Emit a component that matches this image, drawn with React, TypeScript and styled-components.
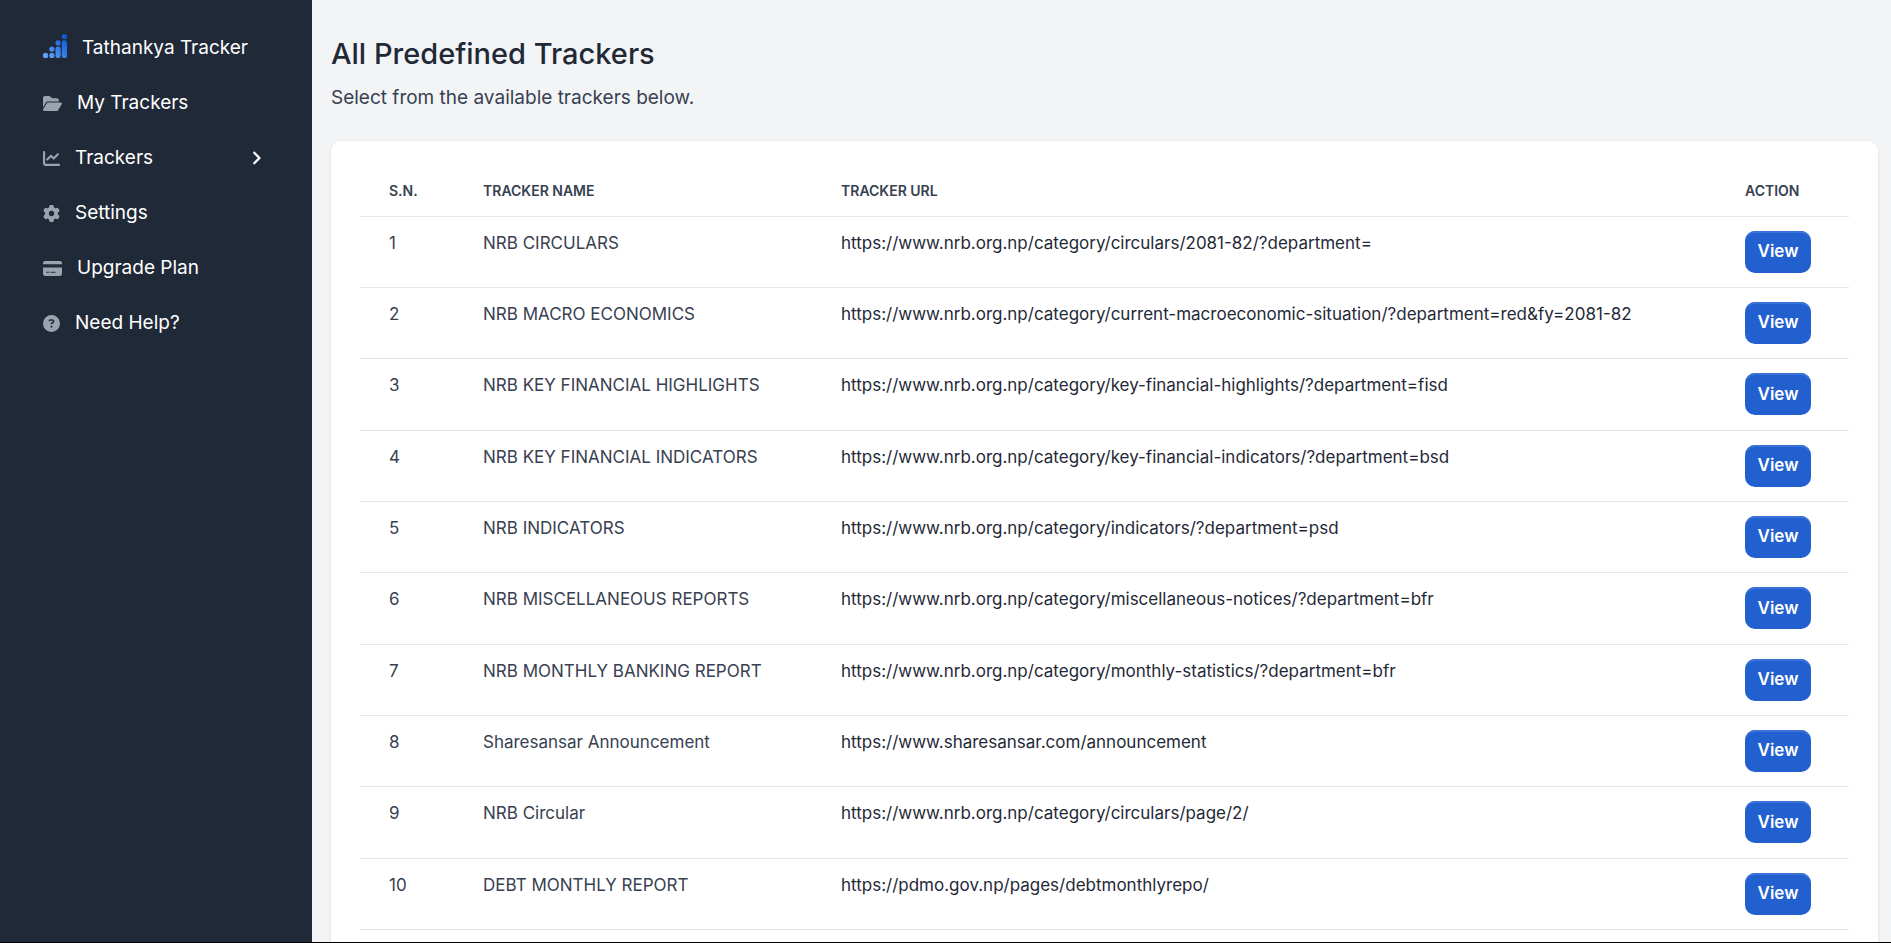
import React from "react";
import styled, { createGlobalStyle } from "styled-components";
import {
  FaFolderOpen,
  FaChartLine,
  FaGear,
  FaCreditCard,
  FaCircleQuestion,
  FaChevronRight,
} from "react-icons/fa6";

const GlobalStyle = createGlobalStyle`
  *, *::before, *::after { box-sizing: border-box; }
  body {
    margin: 0;
    background: #f3f4f6;
    color: #374151;
    font-family: Inter, "Liberation Sans", sans-serif;
    font-size: 17px;
    line-height: 24px;
  }
`;

const Page = styled.div`
  display: flex;
  min-height: 100vh;
  border-bottom: 1px solid #000000;
`;

const Sidebar = styled.aside`
  flex: none;
  width: 312px;
  padding: 26px 36px 26px 28px;
  background: #1f2937;
`;

const NavList = styled.ul`
  display: flex;
  flex-direction: column;
  gap: 11px;
  margin: 0;
  padding: 0;
  list-style: none;
`;

const NavLink = styled.a`
  display: flex;
  align-items: center;
  gap: 15px;
  padding: 8px 15px;
  border-radius: 10px;
  color: #ffffff;
  font-size: 19px;
  line-height: 28px;
  font-weight: 400;
  text-decoration: none;
`;

const NavIcon = styled.span<{ $wide?: boolean }>`
  display: flex;
  flex: none;
  color: #9ca3af;

  > svg {
    width: ${({ $wide }) => ($wide ? "19px" : "17px")};
    height: 17px;
  }
`;

const NavArrow = styled(FaChevronRight)`
  width: 14px;
  height: 14px;
  margin-left: auto;
  margin-right: -2px;
  stroke: #ffffff;
  stroke-width: 24px;
`;

const LogoMark = styled.svg`
  flex: none;
  width: 24px;
  height: 28px;
`;

const Main = styled.main`
  display: flex;
  flex: 1;
  flex-direction: column;
  min-width: 0;
  padding: 34px 13px 0 19px;
`;

const Title = styled.h1`
  margin: 0;
  color: #1f2937;
  font-size: 29px;
  line-height: 40px;
  font-weight: 500;
`;

const Subtitle = styled.p`
  margin: 9px 0 29px;
  font-size: 19px;
  line-height: 29px;
`;

const Card = styled.section`
  display: grid;
  flex: 1;
  padding: 29px 29px 12px;
  border-radius: 10px 10px 0 0;
  background: #ffffff;
  box-shadow: 0 1px 3px rgba(0, 0, 0, 0.12);
`;

const Table = styled.table`
  width: 100%;
  border-collapse: collapse;
  table-layout: fixed;
  text-align: left;
`;

const Column = styled.col<{ $width?: number }>`
  width: ${({ $width }) => ($width ? `${$width}px` : "auto")};
`;

const Row = styled.tr`
  border-bottom: 1px solid #e5e7eb;
`;

const HeadCell = styled.th`
  height: 46px;
  padding: 11px 29px 14px;
  font-size: 14px;
  line-height: 20px;
  font-weight: 600;
  text-transform: uppercase;
`;

const Cell = styled.td<{ $strong?: boolean }>`
  padding: 14px 29px;
  color: ${({ $strong }) => ($strong ? "#1f2937" : "#374151")};
  vertical-align: top;
  white-space: nowrap;
`;

const ViewButton = styled.button`
  display: block;
  min-width: 66px;
  height: 42px;
  padding: 0 12px 1px;
  border: 0;
  border-radius: 10px;
  background: #2260cf;
  box-shadow: inset 0 2px 0 #3a72d8;
  color: #ffffff;
  font-family: inherit;
  font-size: 17px;
  line-height: 24px;
  font-weight: 600;
  cursor: pointer;
`;

const Logo = () => (
  <LogoMark viewBox="0 0 24 28" aria-hidden="true">
    <defs>
      <linearGradient id="logo-blue" x1="24" y1="0" x2="0" y2="24" gradientUnits="userSpaceOnUse">
        <stop offset="0" stopColor="#0550d2" />
        <stop offset="1" stopColor="#6cadff" />
      </linearGradient>
    </defs>
    <g fill="url(#logo-blue)">
      <circle cx="2.6" cy="21.4" r="2.6" />
      <circle cx="8.9" cy="21.4" r="2.6" />
      <circle cx="8.9" cy="15.1" r="2.6" />
      <circle cx="15.1" cy="8.9" r="2.6" />
      <rect x="12.5" y="12.5" width="5.2" height="11.5" rx="2.2" />
      <circle cx="21.4" cy="2.6" r="2.6" />
      <rect x="18.8" y="6.3" width="5.2" height="17.7" rx="2.2" />
    </g>
  </LogoMark>
);

const navItems = [
  { label: "My Trackers", icon: <FaFolderOpen />, wide: true },
  { label: "Trackers", icon: <FaChartLine />, expandable: true },
  { label: "Settings", icon: <FaGear /> },
  { label: "Upgrade Plan", icon: <FaCreditCard />, wide: true },
  { label: "Need Help?", icon: <FaCircleQuestion /> },
];

const nrb = "https://www.nrb.org.np/category/";

const trackers = [
  { name: "NRB CIRCULARS", url: nrb + "circulars/2081-82/?department=" },
  { name: "NRB MACRO ECONOMICS", url: nrb + "current-macroeconomic-situation/?department=red&fy=2081-82" },
  { name: "NRB KEY FINANCIAL HIGHLIGHTS", url: nrb + "key-financial-highlights/?department=fisd" },
  { name: "NRB KEY FINANCIAL INDICATORS", url: nrb + "key-financial-indicators/?department=bsd" },
  { name: "NRB INDICATORS", url: nrb + "indicators/?department=psd" },
  { name: "NRB MISCELLANEOUS REPORTS", url: nrb + "miscellaneous-notices/?department=bfr" },
  { name: "NRB MONTHLY BANKING REPORT", url: nrb + "monthly-statistics/?department=bfr" },
  { name: "Sharesansar Announcement", url: "https://www.sharesansar.com/announcement" },
  { name: "NRB Circular", url: nrb + "circulars/page/2/" },
  { name: "DEBT MONTHLY REPORT", url: "https://pdmo.gov.np/pages/debtmonthlyrepo/" },
];

export default function App() {
  return (
    <>
      <GlobalStyle />
      <Page>
        <Sidebar>
          <nav>
            <NavList>
              <li>
                <NavLink href="#">
                  <Logo />
                  <span>Tathankya Tracker</span>
                </NavLink>
              </li>
              {navItems.map(({ label, icon, wide, expandable }) => (
                <li key={label}>
                  <NavLink href="#">
                    <NavIcon $wide={wide}>{icon}</NavIcon>
                    <span>{label}</span>
                    {expandable && <NavArrow />}
                  </NavLink>
                </li>
              ))}
            </NavList>
          </nav>
        </Sidebar>
        <Main>
          <Title>All Predefined Trackers</Title>
          <Subtitle>Select from the available trackers below.</Subtitle>
          <Card>
            <Table>
              <colgroup>
                <Column $width={94} />
                <Column $width={358} />
                <Column />
                <Column $width={133} />
              </colgroup>
              <thead>
                <Row>
                  <HeadCell scope="col">S.N.</HeadCell>
                  <HeadCell scope="col">Tracker Name</HeadCell>
                  <HeadCell scope="col">Tracker URL</HeadCell>
                  <HeadCell scope="col">Action</HeadCell>
                </Row>
              </thead>
              <tbody>
                {trackers.map(({ name, url }, index) => (
                  <Row key={name}>
                    <Cell>{index + 1}</Cell>
                    <Cell>{name}</Cell>
                    <Cell $strong>{url}</Cell>
                    <Cell>
                      <ViewButton type="button">View</ViewButton>
                    </Cell>
                  </Row>
                ))}
              </tbody>
            </Table>
          </Card>
        </Main>
      </Page>
    </>
  );
}
